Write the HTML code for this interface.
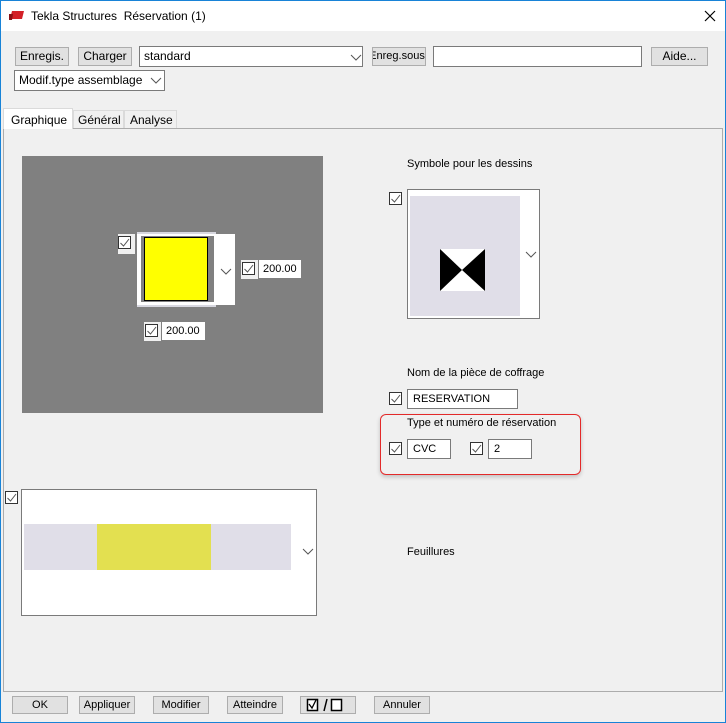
<!DOCTYPE html><html><head><style>
*{box-sizing:border-box;margin:0;padding:0}
body{width:726px;height:723px;background:#f0f0f0;font-family:"Liberation Sans",sans-serif;font-size:12px;color:#000;position:relative;overflow:hidden}
.a{position:absolute}
.btn{position:absolute;background:#e1e1e1;border:1px solid #adadad;text-align:center;line-height:17px;font-size:12px}
.inp{position:absolute;background:#fff;border:1px solid #7a7a7a;padding-left:5px;line-height:18px;font-size:11px}
.cb{position:absolute;width:13px;height:13px;border:1px solid #333;background:#fff}
.cb svg{position:absolute;left:0px;top:0px}
.chev{position:absolute;width:12px;height:7px}
</style></head><body>
<div class="a" style="left:0;top:0;width:726px;height:723px;border:1px solid #1883d7;border-top:none"></div>
<div class="a" style="left:0;top:0;width:726px;height:31px;background:#fff;border:1px solid #1883d7;border-bottom:none"></div>
<svg class="a" style="left:9px;top:9px" width="16" height="14"><polygon points="3,2 15,2 13,10 1,10" fill="#d32027"/><polygon points="0,5 4,5 3,11 0,11" fill="#8a1015"/></svg>
<div class="a" style="left:31px;top:9px;font-size:12px">Tekla Structures &nbsp;Réservation (1)</div>
<svg class="a" style="left:344px;top:9px" width="12" height="12"></svg>
<svg class="a" style="left:704px;top:10px" width="12" height="12"><path d="M1 1L11 11M11 1L1 11" stroke="#000" stroke-width="1.2"/></svg>

<div class="btn" style="left:15px;top:47px;width:54px;height:19px">Enregis.</div>
<div class="btn" style="left:78px;top:47px;width:54px;height:19px">Charger</div>
<div class="inp" style="left:139px;top:46px;width:224px;height:21px;padding-left:4px;font-size:12px">standard</div>
<svg class="chev" style="left:350px;top:54px"><path d="M1 1L6 6L11 1" stroke="#555" fill="none"/></svg>
<div class="btn" style="left:372px;top:47px;width:54px;height:19px;font-size:11px;overflow:hidden;white-space:nowrap;text-indent:-4px">Enreg.sous</div>
<div class="inp" style="left:433px;top:46px;width:209px;height:21px"></div>
<div class="btn" style="left:651px;top:47px;width:57px;height:19px">Aide...</div>
<div class="inp" style="left:14px;top:70px;width:151px;height:21px;padding-left:4px;font-size:12px;line-height:19px">Modif.type assemblage</div>
<svg class="chev" style="left:150px;top:77px"><path d="M1 1L6 6L11 1" stroke="#555" fill="none"/></svg>

<div class="a" style="left:3px;top:128px;width:720px;height:564px;border:1px solid #acacac;background:#f0f0f0"></div>
<div class="a" style="left:3px;top:108px;width:70px;height:21px;background:#fff;border:1px solid #dadada;border-bottom:none;padding:4px 0 0 7px">Graphique</div>
<div class="a" style="left:73px;top:110px;width:51px;height:18px;border:1px solid #dadada;border-bottom:none;padding:2px 0 0 4px">Général</div>
<div class="a" style="left:124px;top:110px;width:53px;height:18px;border:1px solid #dadada;border-bottom:none;padding:2px 0 0 5px">Analyse</div>

<div class="a" style="left:22px;top:156px;width:301px;height:257px;background:#808080"></div>
<div class="a" style="left:137px;top:232px;width:79px;height:3px;background:#d8d8e0"></div>
<div class="a" style="left:137px;top:304px;width:79px;height:3px;background:#d8d8e0"></div>
<div class="a" style="left:137px;top:234px;width:98px;height:71px;background:#fff"></div>
<div class="a" style="left:141px;top:236px;width:73px;height:66px;background:#808080"></div>
<div class="a" style="left:144px;top:237px;width:64px;height:64px;background:#ff0;border:1px solid #000"></div>
<svg class="chev" style="left:220px;top:268px"><path d="M1 1L6 6L11 1" stroke="#555" fill="none"/></svg>
<div class="a" style="left:118px;top:234px;width:17px;height:20px;background:#f0f0f0"></div>
<div class="cb" style="left:118px;top:236px"><svg width="11" height="11"><path d="M1.5 6L4.5 9L10 2" stroke="#555" fill="none"/></svg></div>
<div class="a" style="left:241px;top:260px;width:17px;height:19px;background:#f0f0f0"></div>
<div class="cb" style="left:242px;top:262px"><svg width="11" height="11"><path d="M1.5 6L4.5 9L10 2" stroke="#555" fill="none"/></svg></div>
<div class="inp" style="left:259px;top:260px;width:42px;height:18px;border:none;padding-left:4px;font-size:11px">200.00</div>
<div class="a" style="left:144px;top:322px;width:17px;height:19px;background:#f0f0f0"></div>
<div class="cb" style="left:145px;top:324px"><svg width="11" height="11"><path d="M1.5 6L4.5 9L10 2" stroke="#555" fill="none"/></svg></div>
<div class="inp" style="left:162px;top:322px;width:43px;height:18px;border:none;padding-left:4px;font-size:11px">200.00</div>

<div class="a" style="left:407px;top:158px;font-size:11px">Symbole pour les dessins</div>
<div class="cb" style="left:389px;top:192px"><svg width="11" height="11"><path d="M1.5 6L4.5 9L10 2" stroke="#555" fill="none"/></svg></div>
<div class="a" style="left:407px;top:189px;width:133px;height:130px;background:#fff;border:1px solid #7a7a7a"></div>
<div class="a" style="left:410px;top:196px;width:110px;height:120px;background:#e0dee8"></div>
<svg class="a" style="left:440px;top:249px" width="45" height="42"><rect width="45" height="42" fill="#fff"/><polygon points="0,0 22,21 0,42" fill="#000"/><polygon points="45,0 22,21 45,42" fill="#000"/></svg>
<svg class="chev" style="left:525px;top:251px"><path d="M1 1L6 6L11 1" stroke="#555" fill="none"/></svg>

<div class="a" style="left:407px;top:367px;font-size:11px">Nom de la pièce de coffrage</div>
<div class="cb" style="left:389px;top:392px"><svg width="11" height="11"><path d="M1.5 6L4.5 9L10 2" stroke="#555" fill="none"/></svg></div>
<div class="inp" style="left:407px;top:389px;width:111px;height:20px">RESERVATION</div>
<div class="a" style="left:380px;top:414px;width:201px;height:61px;border:1.5px solid #e32a2a;border-radius:6px;box-shadow:0 2px 4px rgba(0,0,0,.2)"></div>
<div class="a" style="left:407px;top:417px;font-size:11px">Type et numéro de réservation</div>
<div class="cb" style="left:389px;top:442px"><svg width="11" height="11"><path d="M1.5 6L4.5 9L10 2" stroke="#555" fill="none"/></svg></div>
<div class="inp" style="left:407px;top:439px;width:44px;height:20px">CVC</div>
<div class="cb" style="left:470px;top:442px"><svg width="11" height="11"><path d="M1.5 6L4.5 9L10 2" stroke="#555" fill="none"/></svg></div>
<div class="inp" style="left:488px;top:439px;width:44px;height:20px">2</div>

<div class="a" style="left:21px;top:489px;width:296px;height:127px;background:#fff;border:1px solid #7a7a7a"></div>
<div class="a" style="left:4px;top:489px;width:17px;height:18px;background:#f0f0f0"></div>
<div class="cb" style="left:5px;top:491px"><svg width="11" height="11"><path d="M1.5 6L4.5 9L10 2" stroke="#555" fill="none"/></svg></div>
<div class="a" style="left:24px;top:524px;width:267px;height:46px;background:#e0dee8"></div>
<div class="a" style="left:97px;top:524px;width:114px;height:46px;background:#e3e050"></div>
<svg class="chev" style="left:302px;top:548px"><path d="M1 1L6 6L11 1" stroke="#555" fill="none"/></svg>
<div class="a" style="left:407px;top:546px;font-size:11px">Feuillures</div>

<div class="btn" style="left:12px;top:696px;width:56px;height:18px;font-size:11px;line-height:16px">OK</div>
<div class="btn" style="left:79px;top:696px;width:56px;height:18px;font-size:11px;line-height:16px">Appliquer</div>
<div class="btn" style="left:153px;top:696px;width:56px;height:18px;font-size:11px;line-height:16px">Modifier</div>
<div class="btn" style="left:227px;top:696px;width:56px;height:18px;font-size:11px;line-height:16px">Atteindre</div>
<div class="btn" style="left:300px;top:696px;width:56px;height:18px"></div>
<svg class="a" style="left:306px;top:698px" width="46" height="14"><rect x="1.5" y="1.5" width="10" height="11" fill="#fff" stroke="#000" stroke-width="1.5"/><path d="M3 6L6 10L10 2" stroke="#000" stroke-width="1.3" fill="none"/><path d="M18 13L21 1" stroke="#000" stroke-width="1.5"/><rect x="25.5" y="1.5" width="10" height="11" fill="#fff" stroke="#000" stroke-width="1.5"/></svg>
<div class="btn" style="left:374px;top:696px;width:56px;height:18px;font-size:11px;line-height:16px">Annuler</div>
</body></html>
